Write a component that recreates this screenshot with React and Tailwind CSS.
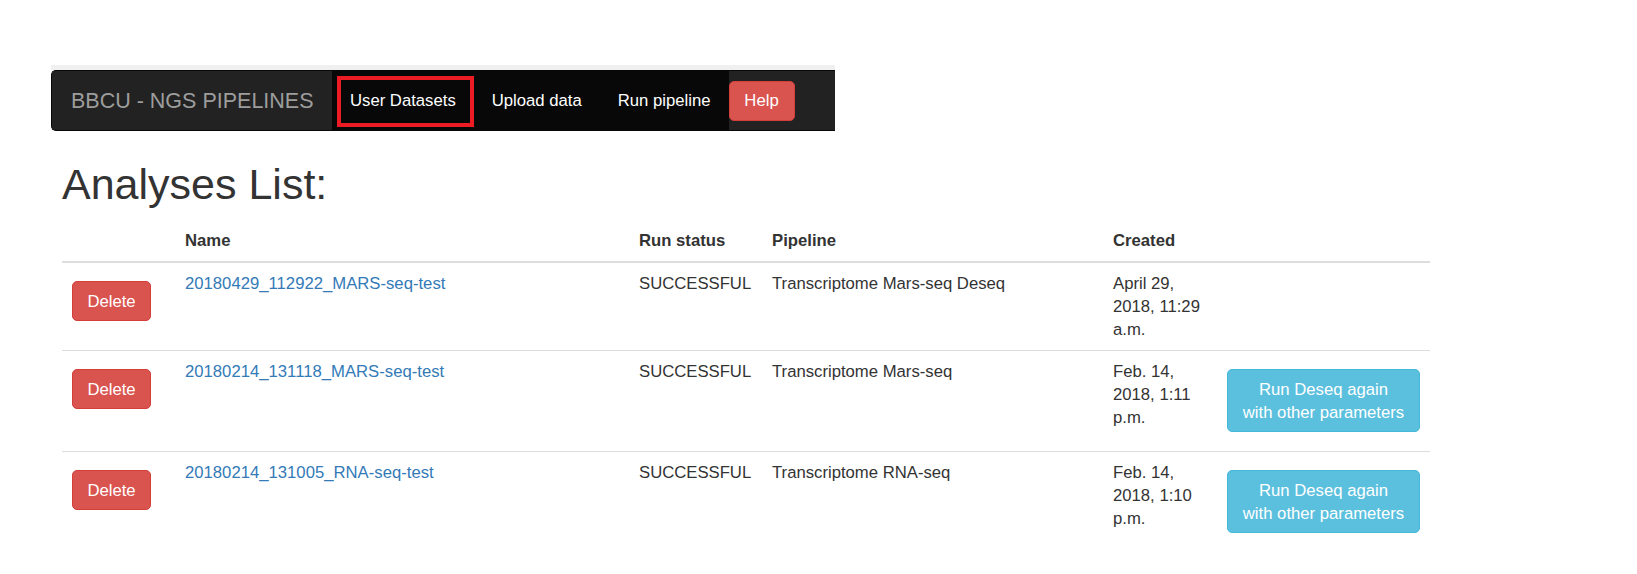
import React from "react";

const rows = [
  {
    name: "20180429_112922_MARS-seq-test",
    status: "SUCCESSFUL",
    pipeline: "Transcriptome Mars-seq Deseq",
    created: "April 29, 2018, 11:29 a.m.",
    rerun: false,
  },
  {
    name: "20180214_131118_MARS-seq-test",
    status: "SUCCESSFUL",
    pipeline: "Transcriptome Mars-seq",
    created: "Feb. 14, 2018, 1:11 p.m.",
    rerun: true,
  },
  {
    name: "20180214_131005_RNA-seq-test",
    status: "SUCCESSFUL",
    pipeline: "Transcriptome RNA-seq",
    created: "Feb. 14, 2018, 1:10 p.m.",
    rerun: true,
  },
];

export default function App() {
  return (
    <div className="min-h-screen w-full bg-white font-['Liberation_Sans',Arial,sans-serif] text-[#333]">
      {/* Navbar */}
      <div className="pt-[65px] pl-[51px]">
        <div className="w-[784px] h-[5px] bg-[#f0f0f0]" />
        <nav className="w-[784px] h-[61px] bg-[#222222] rounded-l-[5px] border border-r-0 border-[#080808] flex items-stretch">
          <div className="w-[280px] flex items-center pl-[19px] text-[21.5px] leading-[24px] text-[#9d9d9d]">
            BBCU - NGS PIPELINES
          </div>
          <ul className="flex items-stretch bg-[#080808]">
            <li className="relative flex items-center px-[18px] text-[16.7px] leading-[23px] text-white">
              User Datasets
              <span className="absolute left-[5px] right-0 top-[5px] bottom-[3px] border-[4px] border-[#ed1c24]" />
            </li>
            <li className="flex items-center px-[18px] text-[16.7px] leading-[23px] text-white">
              Upload data
            </li>
            <li className="flex items-center px-[18px] text-[16.7px] leading-[23px] text-white">
              Run pipeline
            </li>
          </ul>
          <div className="flex items-center">
            <button className="h-[40px] w-[66px] rounded-[5px] bg-[#d9534f] border border-[#d43f3a] text-white text-[16.7px] leading-[23px]">
              Help
            </button>
          </div>
        </nav>
      </div>

      {/* Content */}
      <div className="pl-[62px]">
        <h1 className="mt-[30px] mb-[12px] text-[43px] leading-[47px] font-normal text-[#333]">
          Analyses List:
        </h1>
        <table className="table-fixed border-collapse w-[1368px] text-[16.7px] leading-[23px]">
          <colgroup>
            <col className="w-[113px]" />
            <col className="w-[454px]" />
            <col className="w-[133px]" />
            <col className="w-[341px]" />
            <col className="w-[114px]" />
            <col className="w-[213px]" />
          </colgroup>
          <thead>
            <tr className="border-b-2 border-[#dddddd]">
              <th className="px-[10px] py-[9px]" />
              <th className="px-[10px] py-[9px] text-left font-bold align-bottom">Name</th>
              <th className="px-[10px] py-[9px] text-left font-bold align-bottom">Run status</th>
              <th className="px-[10px] py-[9px] text-left font-bold align-bottom">Pipeline</th>
              <th className="px-[10px] py-[9px] text-left font-bold align-bottom">Created</th>
              <th className="px-[10px] py-[9px]" />
            </tr>
          </thead>
          <tbody>
            {rows.map((r, i) => (
              <tr key={r.name} className={i > 0 ? "border-t border-[#dddddd]" : ""}>
                <td className="px-[10px] py-[9px] align-top">
                  <div className="mt-[9px] mb-[10px]">
                    <button className="h-[40px] w-[79px] rounded-[5px] bg-[#d9534f] border border-[#d43f3a] text-white">
                      Delete
                    </button>
                  </div>
                </td>
                <td className="px-[10px] py-[9px] align-top">
                  <a className="text-[#337ab7]">{r.name}</a>
                </td>
                <td className="px-[10px] py-[9px] align-top">{r.status}</td>
                <td className="px-[10px] py-[9px] align-top">{r.pipeline}</td>
                <td className="px-[10px] py-[9px] align-top">{r.created}</td>
                <td className="px-[10px] py-[9px] align-top">
                  {r.rerun && (
                    <div className="mt-[9px] mb-[10px]">
                      <button className="w-[193px] h-[63px] rounded-[5px] bg-[#5bc0de] border border-[#46b8da] text-white leading-[23px]">
                        Run Deseq again
                        <br />
                        with other parameters
                      </button>
                    </div>
                  )}
                </td>
              </tr>
            ))}
          </tbody>
        </table>
      </div>
    </div>
  );
}
